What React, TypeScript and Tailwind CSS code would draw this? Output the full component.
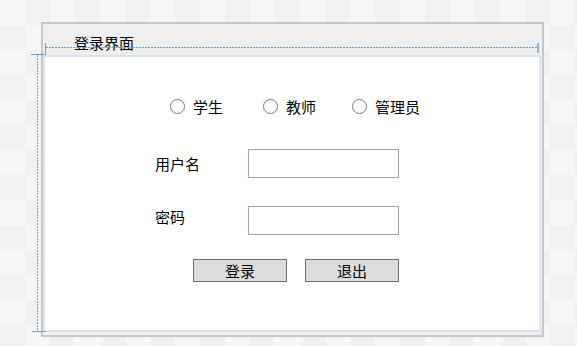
const cjk = "font-['Microsoft_YaHei','Noto_Sans_CJK_SC',sans-serif]";

function Radio({ label, width }: { label: string; width: string }) {
  return (
    <div className={`flex items-center gap-2 ${width}`}>
      <span className="w-[15px] h-[15px] rounded-full border border-[#7a7a7a] bg-white shrink-0" />
      <span className="leading-none">{label}</span>
    </div>
  );
}

function Field({ label, top, labelPad = "" }: { label: string; top: string; labelPad?: string }) {
  return (
    <div className={`flex items-center ${top}`}>
      <span className={`w-[93px] leading-none ${labelPad}`}>{label}</span>
      <div className="w-[151px] h-[29px] border border-[#a4a4ac] bg-white" />
    </div>
  );
}

export default function App() {
  return (
    <div
      className={`relative w-[577px] h-[346px] overflow-hidden pl-[41px] pt-[22px] text-[15px] text-black ${cjk} bg-[conic-gradient(#f1f1f1_25%,#f6f6f6_0_50%,#f1f1f1_0_75%,#f6f6f6_0)] bg-[length:50px_50px]`}
    >
      <div className="w-[503px] h-[315px] border-2 border-[#c6c6c6] bg-[#efefef] flex flex-col">
        <div className="h-[31px] pl-[31px] pt-[11px] leading-none">登录界面</div>
        <div className="h-[277px] mr-px border-2 border-[#dae3f2] bg-white flex flex-col">
          <div className="flex pl-[125px] pt-[42px]">
            <Radio label="学生" width="w-[93px]" />
            <Radio label="教师" width="w-[89px]" />
            <Radio label="管理员" width="w-[80px]" />
          </div>
          <div className="pl-[110px]">
            <Field label="用户名" top="mt-[35px]" />
            <Field label="密码" top="mt-[28px]" labelPad="pb-[9px]" />
          </div>
          <div className="flex gap-[18px] pl-[148px] mt-[24px]">
            <button className="w-[94px] h-[23px] border border-[#707070] bg-[#dddddd] leading-none">登录</button>
            <button className="w-[94px] h-[23px] border border-[#707070] bg-[#dddddd] leading-none">退出</button>
          </div>
        </div>
      </div>

      {/* designer layout markers */}
      <div className="absolute left-[46px] top-[47px] w-[491px] h-px bg-[repeating-linear-gradient(90deg,#6f9be0_0_2px,transparent_2px_3px)]" />
      <div className="absolute left-[45px] top-[43px] h-[12px] w-px bg-[#6f9be0]" />
      <div className="absolute left-[537px] top-[43px] h-[10px] w-[2px] bg-[#8fb2ec]" />
      <div className="absolute left-[31px] top-[54px] w-[15px] h-px bg-[#6f9be0]" />
      <div className="absolute left-[37px] top-[55px] h-[276px] w-px bg-[repeating-linear-gradient(180deg,#6f9be0_0_2px,transparent_2px_3px)]" />
      <div className="absolute left-[32px] top-[331px] w-[14px] h-px bg-[#6f9be0]" />
    </div>
  );
}
